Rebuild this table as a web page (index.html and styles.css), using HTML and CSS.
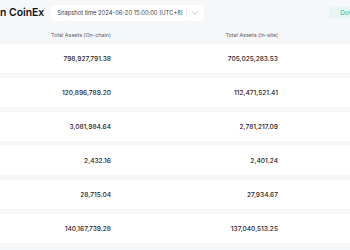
FILE: index.html
```html
<!DOCTYPE html>
<html>
<head>
<meta charset="utf-8">
<link rel="stylesheet" href="styles.css">
</head>
<body>
<div class="page">
  <div class="top">
    <h1 class="title">n CoinEx</h1>
    <div class="select">
      <span class="select-text">Snapshot time 2024-06-20 15:00:00 (UTC+8)</span>
      <span class="divider"></span>
      <svg class="chev" width="6" height="4" viewBox="0 0 6 4"><path d="M0.5 0.8 L3 3.2 L5.5 0.8" fill="none" stroke="#a8adb4" stroke-width="0.7"/></svg>
    </div>
    <button class="dl">Download</button>
  </div>
  <div class="row head">
    <div class="cell">Total Assets (On-chain)</div>
    <div class="cell">Total Assets (In-site)</div>
  </div>
  <div class="rows">
    <div class="row"><div class="cell">798,927,791.38</div><div class="cell">705,025,283.53</div></div>
    <div class="row"><div class="cell">120,896,789.20</div><div class="cell">112,471,521.41</div></div>
    <div class="row"><div class="cell">3,081,984.64</div><div class="cell">2,781,217.09</div></div>
    <div class="row"><div class="cell">2,432.16</div><div class="cell">2,401.24</div></div>
    <div class="row"><div class="cell">28,715.04</div><div class="cell">27,934.67</div></div>
    <div class="row"><div class="cell">140,167,739.28</div><div class="cell">137,040,513.25</div></div>
  </div>
</div>
</body>
</html>
```
FILE: styles.css
```css
html, body {
  margin: 0;
  padding: 0;
  background: #f6f7f9;
  overflow: hidden;
  font-family: Inter, "Noto Sans", sans-serif;
}
.page {
  width: 350px;
}
.top {
  display: flex;
  align-items: center;
  height: 25px;
  white-space: nowrap;
}
.title {
  margin: 0;
  font-size: 10.4px;
  font-weight: 600;
  color: #111;
  flex-shrink: 0;
}
.select {
  flex-shrink: 0;
  margin-left: 7px;
  width: 153px;
  height: 16px;
  box-sizing: border-box;
  background: #fff;
  border-radius: 4px;
  display: flex;
  align-items: center;
  padding-left: 6px;
}
.select-text {
  font-size: 5.8px;
  color: #3a3d42;
  flex-shrink: 0;
}
.divider {
  flex-shrink: 0;
  width: 1px;
  height: 8px;
  background: #e6e8eb;
  margin-left: 3px;
}
.chev {
  flex-shrink: 0;
  margin-left: 5px;
}
.dl {
  flex-shrink: 0;
  margin-left: 125px;
  height: 12px;
  border: 0;
  border-radius: 2px;
  background: #e7f6f2;
  color: #26bfa0;
  font-family: inherit;
  font-size: 6.4px;
  padding: 0 10px 0 11px;
  line-height: 12px;
}
.row {
  display: grid;
  grid-template-columns: 111px 167px 1fr;
  align-items: center;
  height: 29px;
  background: #fff;
}
.row.head {
  height: 18px;
  background: transparent;
  font-size: 5.4px;
  color: #5e636b;
  padding-top: 1px;
}
.rows {
  display: flex;
  flex-direction: column;
  gap: 5px;
  font-size: 6.6px;
  font-weight: 500;
  color: #1f2226;
}
.cell {
  text-align: right;
  white-space: nowrap;
}
```
